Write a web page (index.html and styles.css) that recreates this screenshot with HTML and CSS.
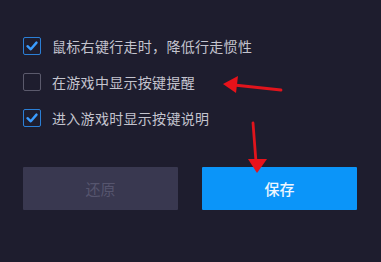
FILE: index.html
```html
<!DOCTYPE html>
<html lang="zh">
<head>
<meta charset="utf-8">
<link rel="stylesheet" href="styles.css">
</head>
<body>
<div class="panel">
  <div class="options">
    <div class="option">
      <span class="box checked"><svg viewBox="0 0 18 18" width="18" height="18"><path d="M4.5 9.2 L7.8 12.3 L13.5 5.6" fill="none" stroke="#3a9cff" stroke-width="2.4" stroke-linecap="round" stroke-linejoin="round"/></svg></span>
      <span class="label">鼠标右键行走时，降低行走惯性</span>
    </div>
    <div class="option">
      <span class="box"></span>
      <span class="label">在游戏中显示按键提醒</span>
    </div>
    <div class="option">
      <span class="box checked"><svg viewBox="0 0 18 18" width="18" height="18"><path d="M4.5 9.2 L7.8 12.3 L13.5 5.6" fill="none" stroke="#3a9cff" stroke-width="2.4" stroke-linecap="round" stroke-linejoin="round"/></svg></span>
      <span class="label">进入游戏时显示按键说明</span>
    </div>
  </div>
  <div class="buttons">
    <button class="btn reset">还原</button>
    <button class="btn save">保存</button>
  </div>
</div>
<svg class="arrows" width="381" height="262" viewBox="0 0 381 262">
  <line x1="281" y1="90" x2="234" y2="85" stroke="#e0141c" stroke-width="2.8" stroke-linecap="round"/>
  <polygon points="223,84 238,76 236,93" fill="#e8121a"/>
  <line x1="253" y1="123" x2="256" y2="162" stroke="#e0141c" stroke-width="2.8" stroke-linecap="round"/>
  <polygon points="248,159 267,159 257,173" fill="#e8121a"/>
</svg>
</body>
</html>
```
FILE: styles.css
```css
html, body {
  margin: 0;
  padding: 0;
  background: #1e1d2e;
  width: 381px;
  height: 262px;
  overflow: hidden;
  font-family: "Noto Sans CJK SC", "Noto Sans", sans-serif;
}
.panel {
  padding: 37px 0 0 23px;
  display: flex;
  flex-direction: column;
  gap: 40px;
}
.options {
  display: flex;
  flex-direction: column;
  gap: 18px;
}
.option {
  display: flex;
  align-items: center;
  gap: 11px;
  height: 18px;
}
.box {
  width: 18px;
  height: 18px;
  box-sizing: border-box;
  border: 1.5px solid #5b5a6c;
  border-radius: 2px;
  display: flex;
  align-items: center;
  justify-content: center;
  flex: none;
}
.box svg { display: block; margin: -1.5px; }
.box.checked {
  border-color: #2b7fd6;
}
.label {
  color: #c4c4ce;
  font-size: 14px;
  line-height: 18px;
  letter-spacing: 0.3px;
}
.buttons {
  display: flex;
  gap: 24px;
}
.btn {
  width: 155px;
  height: 43px;
  border: none;
  border-radius: 1px;
  font-family: "Noto Sans CJK SC", sans-serif;
  font-size: 15px;
  padding: 0;
}
.reset {
  background: #393850;
  color: #56556e;
}
.save {
  background: #0b95f9;
  color: #eef6ff;
  font-weight: 500;
}
.arrows {
  position: absolute;
  left: 0;
  top: 0;
  pointer-events: none;
}
```
